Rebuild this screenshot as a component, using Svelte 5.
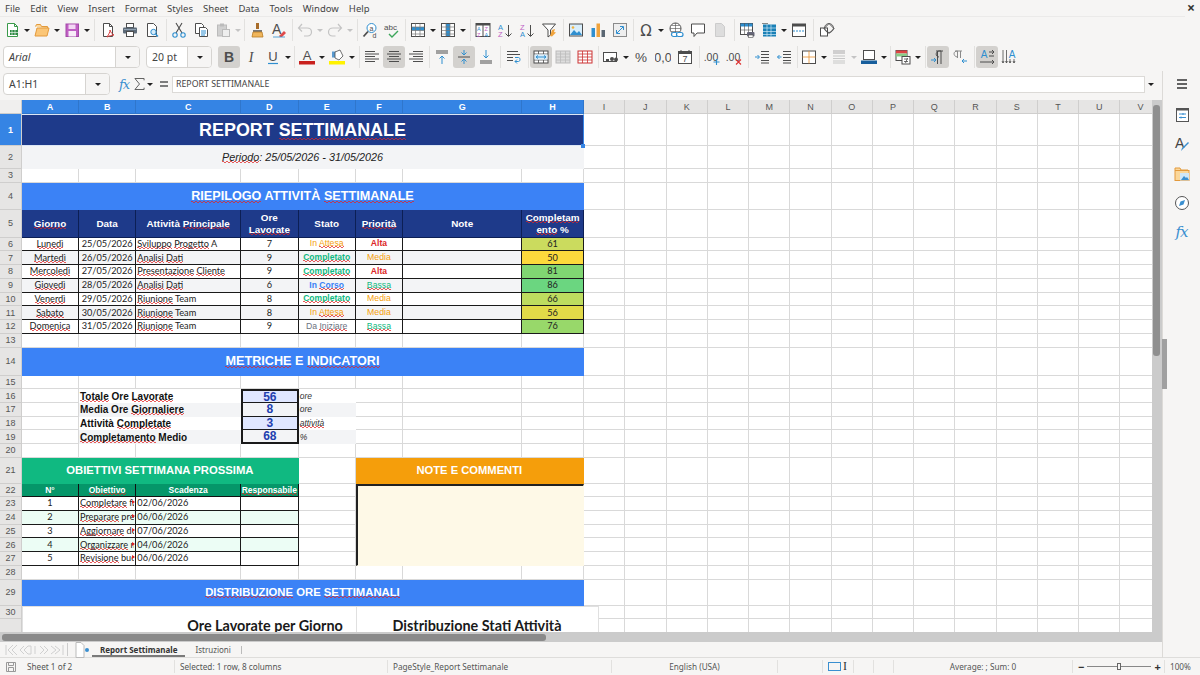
<script>
const S = (c, w = 1) => `fill="none" stroke="${c}" stroke-width="${w}"`;
const G = '#4d4d4d', B = '#2f8fd0', O = '#e8912d', R = '#d33', L = '#8a8a8a';
const icons = {
  new: `<path d="M3.5 1.5h7l3 3v10h-10z" fill="#fff" stroke="#3a9a4a"/><path d="M10.5 1.5v3h3" ${S('#3a9a4a')}/><rect x="6" y="8" width="8" height="5" fill="#2e8b44"/><path d="M8 8v5M11 8v5M6 10.5h8" ${S('#fff',.6)}/>`,
  open: `<path d="M1.5 4.5l1-2h4l1 2h6v2" fill="#fbd79a" stroke="#e39a3c"/><path d="M1 14l2-8h12l-2 8z" fill="#fbc677" stroke="#e39a3c"/>`,
  save: `<rect x="2" y="2" width="12.5" height="12.5" fill="#c05fc4" stroke="#a34aa8"/><rect x="4.5" y="2.5" width="7" height="4.5" fill="#f3d8f4"/><rect x="4.5" y="9" width="7.5" height="5.5" fill="#f8ecf8"/>`,
  pdf: `<path d="M3.5 1.5h6l3 3v10h-9z" fill="#fff" stroke="${G}"/><path d="M9.5 1.5v3h3" ${S(G)}/><path d="M7 15c2-3 3-5 3-7 1 3 2 4 4 5-2 0-5 1-7 2z" ${S('#d94040')}/>`,
  print: `<rect x="4.5" y="1.5" width="7" height="4" fill="#fff" stroke="${G}"/><rect x="1" y="5.5" width="14" height="6" rx="1" fill="#5c6a78"/><rect x="4.5" y="9.5" width="7" height="5" fill="#fff" stroke="${G}"/><path d="M2 7.5h12" stroke="#8fa0b0"/>`,
  preview: `<path d="M3.5 1.5h6l3 3v10h-9z" fill="#fff" stroke="${G}"/><circle cx="9.5" cy="10" r="2.7" fill="#d7ecfa" stroke="${B}"/><path d="M11.5 12l2.5 2.5" stroke="${B}" stroke-width="1.4"/>`,
  cut: `<path d="M5 1l6 10M11 1L5 11" ${S(G,1.1)}/><circle cx="4" cy="13" r="2.2" ${S(B,1.1)}/><circle cx="12" cy="13" r="2.2" ${S(B,1.1)}/>`,
  copy: `<path d="M2.5 1.5h6l2 2v8h-8z" fill="#fff" stroke="${G}"/><path d="M6.5 5.5h6l2 2v7h-8z" fill="#fff" stroke="${G}"/><path d="M8 9h5M8 11h5M8 13h4" stroke="${B}"/>`,
  paste: `<rect x="2.5" y="3" width="9" height="11" fill="#d0d0d0" stroke="#bbb"/><rect x="5" y="1.5" width="4" height="3" fill="#bbb"/><rect x="7.5" y="7.5" width="7" height="7" fill="#eee" stroke="#bbb"/>`,
  clone: `<rect x="7" y="1" width="3" height="6" fill="#a86c2a"/><path d="M4 8h9v2H4z" fill="#777"/><path d="M4 10h9l1 5H3z" fill="#f0b65c" stroke="#b97c24" stroke-width=".8"/>`,
  clear: `<text x="1" y="12" font-size="14" font-family="Liberation Sans" fill="${G}">A</text><path d="M8 14l5-5 2 2-4 4H9z" fill="#e04a4a"/><path d="M2 15h12" stroke="${B}" stroke-width=".8"/>`,
  undo: `<path d="M5 2L1.5 6 5 9.5M2 6h8c3 0 4.500 2 4.500 4s-1.500 4-4 4H7" ${S('#c4c4c4',1.2)}/>`,
  redo: `<path d="M11 2l3.500 4L11 9.500M14 6H6C3 6 1.500 8 1.500 10s1.500 4 4 4h3" ${S('#c4c4c4',1.2)}/>`,
  find: `<circle cx="9.500" cy="6" r="4.500" fill="#fff" stroke="${B}"/><path d="M6 9.500l-4.500 5" stroke="${G}" stroke-width="1.800"/><text x="7.500" y="8.500" font-size="7" font-family="Liberation Sans" fill="${G}">a</text><text x="10.500" y="15.500" font-size="7" font-family="Liberation Sans" fill="${G}">d</text>`,
  spell: `<text x="0" y="8" font-size="8" font-family="Liberation Sans" fill="${G}">abc</text><path d="M5 12l3 3 6-6" ${S('#3ca65a',1.4)}/>`,
  rows: `<rect x="1.500" y="1.500" width="13" height="13" fill="#fff" stroke="${G}"/><rect x="2" y="5" width="12" height="3.500" fill="${B}"/><path d="M1.500 5h13M1.500 8.500h13M1.500 12h13M5.500 1.500v13M10 1.500v13" ${S('#777',.7)}/>`,
  cols: `<rect x="1.500" y="1.500" width="13" height="13" fill="#fff" stroke="${G}"/><rect x="6" y="2" width="4" height="12" fill="${B}"/><path d="M1.500 5h13M1.500 8.500h13M1.500 12h13M6 1.500v13M10 1.500v13" ${S('#777',.7)}/>`,
  sort: `<rect x="1" y="1.500" width="14" height="13" fill="#fff" stroke="${G}"/><path d="M1 1.500h14v2H1z" fill="${G}"/><path d="M8 3v11" stroke="${G}"/><text x="2" y="9" font-size="5.500" font-family="Liberation Sans" fill="${B}">A</text><text x="2" y="14.500" font-size="5.500" font-family="Liberation Sans" fill="#c05fc4">Z</text><text x="9.500" y="9" font-size="5.500" font-family="Liberation Sans" fill="#c05fc4">Z</text><text x="9.500" y="14.500" font-size="5.500" font-family="Liberation Sans" fill="${B}">A</text>`,
  asc: `<text x="1" y="7.500" font-size="7.500" font-family="Liberation Sans" fill="${B}">A</text><text x="1" y="15" font-size="7.500" font-family="Liberation Sans" fill="#c05fc4">Z</text><path d="M11.500 3v11M8.500 11.500l3 3 3-3" ${S(G)}/>`,
  desc: `<text x="1" y="7.500" font-size="7.500" font-family="Liberation Sans" fill="#c05fc4">Z</text><text x="1" y="15" font-size="7.500" font-family="Liberation Sans" fill="${B}">A</text><path d="M11.500 3v11M8.500 11.500l3 3 3-3" ${S(G)}/>`,
  filter: `<path d="M1.500 2h13L9.500 8v5L7 15V8z" fill="#fff" stroke="${G}"/><path d="M9 14l2-6 3-1-1 3 2 .5-4 4z" fill="#f0a33c"/>`,
  image: `<rect x="1.500" y="2" width="13" height="12" fill="#d9eefb" stroke="${G}"/><circle cx="5" cy="5.500" r="1.300" fill="#f2b23e"/><path d="M2 13l4-5 3 3 2-2 3 4z" fill="${B}"/>`,
  chart: `<rect x="1.500" y="6" width="3.500" height="9" fill="${B}"/><rect x="6.500" y="1.500" width="3.500" height="13.500" fill="#f0a33c"/><rect x="11.500" y="8" width="3.500" height="7" fill="#5a6672"/>`,
  pivot: `<rect x="1.500" y="1.500" width="13" height="13" fill="#eee" stroke="${L}"/><path d="M5 11l6-6M8 4.500h3.500V8M8 11.500H4.500V8" ${S(B)}/>`,
  omega: `<text x="8" y="13.500" text-anchor="middle" font-size="15" font-family="DejaVu Sans" fill="${G}">Ω</text>`,
  link: `<circle cx="7.500" cy="6.500" r="5.500" fill="#fff" stroke="${G}"/><path d="M2 6.500h11M7.500 1v11M3.500 3.500h8M3.500 9.500h8" ${S(G,.6)}/><rect x="3.500" y="10.500" width="6" height="4" rx="2" fill="#fff" stroke="${B}" stroke-width="1.200"/><rect x="8.500" y="10.500" width="6.500" height="4" rx="2" fill="#fff" stroke="${B}" stroke-width="1.200"/>`,
  comment: `<path d="M1.500 2h13v9H7l-3 3.500V11H1.500z" fill="#fff" stroke="${G}"/>`,
  hf: `<path d="M3.500 1.500h6l3 3v10h-9z" fill="#ddd" stroke="#ccc"/>`,
  dprint: `<rect x="1.500" y="1.500" width="12" height="11" fill="#fff" stroke="${G}"/><path d="M1.500 1.500h12v3h-12z" fill="${B}"/><path d="M1.500 8h12M5.500 1.500v11M9.500 1.500v11" ${S(G,.6)}/><rect x="8" y="10" width="7.500" height="4.500" rx="1" fill="#667"/><rect x="9.500" y="13" width="4.500" height="2.500" fill="#fff" stroke="${G}" stroke-width=".6"/>`,
  freeze: `<rect x="2" y="2.500" width="13" height="12" fill="#1a80b6"/><path d="M2 6h13M2 9.500h13M2 12.500h13M6 2.500v12M10 2.500v12" ${S('#cfe8f6',.7)}/><path d="M1 1.500h6" stroke="#888"/>`,
  split: `<rect x="1.500" y="2" width="13" height="12.500" fill="#fff" stroke="${G}"/><path d="M1.500 2h13v2.500h-13z" fill="${G}"/><path d="M2 9h12" stroke="${B}" stroke-dasharray="2 1"/>`,
  shapes: `<rect x="1.500" y="6" width="7" height="8" fill="#fff" stroke="${G}"/><path d="M10 1.500l5 5-5 5-5-5z" fill="none" stroke="${G}"/><circle cx="10" cy="6" r="4.500" ${S(G,.8)}/>`,
  i: `<text x="8" y="13" text-anchor="middle" font-size="14" font-style="italic" font-family="Liberation Serif" fill="${G}">I</text>`,
  b: `<text x="8" y="13" text-anchor="middle" font-size="14" font-weight="700" font-family="Liberation Sans" fill="${G}">B</text>`,
  u: `<text x="8" y="12" text-anchor="middle" font-size="13" font-family="Liberation Sans" fill="${G}">U</text><path d="M3 14.500h10" stroke="${B}" stroke-width="1.200"/>`,
  color: `<text x="8" y="11" text-anchor="middle" font-size="13" font-family="Liberation Sans" fill="${G}">A</text><rect x="0" y="12" width="16" height="3.500" fill="#c9211e"/>`,
  hl: `<path d="M3 2.500h4v6H3z" fill="#5a9ad0"/><path d="M6 3l5-2 3 6-4 4-4-2z" fill="#fff" stroke="${G}" stroke-width=".8"/><rect x="0" y="12" width="16" height="3.500" fill="#fff200"/>`,
  al: `<path d="M1 2.500h10M1 5h14M1 7.500h10M1 10h14M1 12.500h10" ${S(G)}/>`,
  ac: `<path d="M3 2.500h10M1 5h14M3 7.500h10M1 10h14M3 12.500h10" ${S(G)}/>`,
  ar: `<path d="M5 2.500h10M1 5h14M5 7.500h10M1 10h14M5 12.500h10" ${S(G)}/>`,
  vt: `<path d="M2 2h12M2 4h12" ${S(G)}/><path d="M8 7v8M5.500 9.500L8 7l2.500 2.500" ${S(B)}/>`,
  vc: `<path d="M2 8h12" ${S(G)}/><path d="M8 1v5M5.500 3.500L8 6l2.500-2.500M8 15v-5M5.500 12.500L8 10l2.500 2.500" ${S(B)}/>`,
  vb: `<path d="M2 12h12M2 14h12" ${S(G)}/><path d="M8 1v8M5.500 6.500L8 9l2.500-2.500" ${S(B)}/>`,
  wrap: `<path d="M1 2.500h11M1 5.500h13M1 8.500h6M1 11.500h6" ${S(G)}/><path d="M9 8.500h3.500c2 0 2 4 0 4H9M11 10.500l-2 2 2 2" ${S(B)}/>`,
  merge: `<rect x="1" y="2" width="14" height="12" fill="#fff" stroke="${G}"/><path d="M1 5h14M1 11h14M5.500 2v3M10.500 2v3M5.500 11v3M10.500 11v3" ${S(G,.8)}/><rect x="1.500" y="5.500" width="13" height="5" fill="#d9eefb"/><path d="M3 8h10M3 8l2-1.500M3 8l2 1.500M13 8l-2-1.500M13 8l-2 1.500" ${S(B)}/>`,
  unmerge: `<rect x="1" y="2" width="14" height="12" fill="#ddd" stroke="#bbb"/><path d="M1 5h14M1 8h14M1 11h14M5.500 2v12M10.500 2v12" ${S('#bbb',.8)}/>`,
  cellcf: `<rect x="1" y="2" width="14" height="12" fill="#fff" stroke="#c33"/><path d="M1 5h14M1 8h14M1 11h14M5.500 2v12M10.500 2v12" ${S('#c33',.8)}/>`,
  cur: `<rect x="0.500" y="3.500" width="13" height="9" fill="#fff" stroke="${G}"/><circle cx="9" cy="10" r="2" fill="${G}"/><circle cx="13" cy="10.500" r="2" fill="${G}"/><rect x="3" y="10" width="3" height="3" fill="${G}"/>`,
  pct: `<text x="8" y="13" text-anchor="middle" font-size="13.500" font-family="Liberation Sans" fill="${G}">%</text>`,
  num: `<text x="8" y="13" text-anchor="middle" font-size="12.500" font-family="Liberation Sans" fill="${G}">0,0</text>`,
  date: `<rect x="1.500" y="2.500" width="13" height="12" fill="#fff" stroke="${G}"/><path d="M1.500 2.500h13v2h-13zM4 1v2M12 1v2" fill="${G}" stroke="${G}"/><text x="8" y="13" text-anchor="middle" font-size="9" font-family="Liberation Sans" fill="${G}">7</text>`,
  dadd: `<text x="7" y="12" text-anchor="middle" font-size="10.500" font-family="Liberation Sans" fill="${G}">.00</text><path d="M12.500 10v6M9.500 13h6" ${S(B,1.100)}/>`,
  ddel: `<text x="7" y="12" text-anchor="middle" font-size="10.500" font-family="Liberation Sans" fill="${G}">.00</text><path d="M10 10.500l5 5M15 10.500l-5 5" ${S(R,1.100)}/>`,
  ind: `<path d="M7 2.500h8M7 5.500h8M7 8.500h8M7 11.500h8M7 14h8" ${S(G)}/><path d="M1 8h4M3.500 6l2 2-2 2" ${S(B)}/>`,
  outd: `<path d="M7 2.500h8M7 5.500h8M7 8.500h8M7 11.500h8M7 14h8" ${S(G)}/><path d="M5.500 8h-4M3.500 6l-2 2 2 2" ${S(B)}/>`,
  bord: `<rect x="1.500" y="2" width="13" height="12.500" fill="#fff" stroke="${G}"/><path d="M8 2v12.500M1.500 8h13" ${S(O,.8)}/>`,
  bstyle: `<path d="M2 2h12M2 4h12" ${S('#aaa',1.200)}/><path d="M2 7h12M2 9.500h12M2 12h12M2 14h12" ${S('#bbb',.8)}/>`,
  bcol: `<rect x="2.500" y="1.500" width="11" height="9" fill="#fff" stroke="${G}"/><path d="M0 15h16v-3.500H0z" fill="#175e9c"/>`,
  cond: `<rect x="1" y="1.500" width="11" height="10" fill="#fff" stroke="${G}"/><path d="M1 1.500h11v3H1z" fill="#d44"/><path d="M1 4.500h11v3H1z" fill="#8c8"/><rect x="7" y="7.500" width="8" height="7.500" fill="#fff" stroke="${G}"/><path d="M9 10h4M9 12.500h4M12.500 9l-2 5" ${S(G,.8)}/>`,
  ltr: `<path d="M7.500 15V2M11 15V2M6 2h7M11 2C5 1 5 8 9 8" ${S(G)}/><path d="M1 11h5M4 9l2 2-2 2" ${S(B)}/>`,
  rtl: `<path d="M5.500 9V2M8.500 9V2M3 2h7M5.500 2C1 2 1 7 5 8" ${S(L)}/><path d="M15 12h-5M12 10l-2 2 2 2" ${S(B)}/>`,
  tltr: `<text x="5" y="8.500" text-anchor="middle" font-size="10" font-family="Liberation Sans" fill="${B}">A</text><path d="M10 3h5M10 7h5M1 13h14M13 1l2 2-2 2M13 11l2 2-2 2" ${S(G)}/>`,
  tvert: `<text x="11" y="9" text-anchor="middle" font-size="10" font-family="Liberation Sans" fill="${B}">A</text><path d="M2 1v13M5.500 1v13M1 12l1 2 1-2M4.500 12l1 2 1-2M9 10v4M8 12l1 2 1-2M13 10v4M12 12l1 2 1-2" ${S(G,.8)}/>`,
};
const t1 = ['new','a','open','a','save','a','s6','pdf','print','preview','s5','cut','copy','paste','ag','s4','clone','clear','s4','undo','ag','redo','ag','s5','find','spell','s4','rows','a','cols','a','s5','sort','asc','desc','filter','s5','image','chart','pivot','s4','omega','a','link','comment','hf','s5','dprint','freeze','a','split','s6','shapes'];
const t2 = ['*b','i','u','a','s4','color','a','hl','a','s5','al','*ac','ar','s4','vt','*vc','vb','s6','wrap','s5','*merge','unmerge','cellcf','s4','cur','a','pct','num','date','s5','dadd','ddel','s6','ind','outd','s3','bord','a','bstyle','ag','bcol','a','s4','cond','a','s5','*ltr','rtl','s5','*tltr','tvert'];
const isSep = (t) => /^s\d$/.test(t);
const menus = ['File','Edit','View','Insert','Format','Styles','Sheet','Data','Tools','Window','Help'];

const colW = [57,57.3,104.7,57.7,57,47.5,119,61.800,...Array(14).fill(41.280)];
const rowH = [32,23,13.500,27,28,13.800,13.800,13.700,13.800,13.800,13.700,13.800,13.800,28,13.500,13.700,13.700,13.700,13.800,13.500,26,13.500,13.800,13.800,13.800,13.700,13.800,13.700,26,13.800,40];
const letters = 'ABCDEFGHIJKLMNOPQRSTUV'.split('');
const cellsSpec = [];
const add = (c, r, text, cls = '', cs = 1, rs = 1) => cellsSpec.push({ c, r, text, cls, cs, rs });
add(1,1,'REPORT ~SETTIMANALE~','title',8);
add(1,2,'~Periodo~: 25/05/2026 - 31/05/2026','period',8);
add(1,4,'~RIEPILOGO~ ATTIVITÀ ~SETTIMANALE~','band big',8);
['~Giorno~','Data','Attività ~Principale~','Ore ~Lavorate~','Stato','~Priorità~','Note','~Completam ento~ %'].forEach((t,i)=>add(i+1,5,t,'thead'));
const data = [
  ['~Lunedì~','25/05/2026','~Sviluppo~ ~Progetto~ A',7,'In ~Attesa~','wait','Alta','high',61,'#cbdb5e'],
  ['~Martedì~','26/05/2026','~Analisi~ ~Dati~',9,'~Completato~','done','Media','mid',50,'#fcd93c'],
  ['~Mercoledì~','27/05/2026','~Presentazione~ ~Cliente~',9,'~Completato~','done','Alta','high',81,'#80d672'],
  ['~Giovedì~','28/05/2026','~Analisi~ ~Dati~',6,'In ~Corso~','prog','~Bassa~','low',86,'#6bd680'],
  ['~Venerdì~','29/05/2026','~Riunione~ Team',8,'~Completato~','done','Media','mid',66,'#bddc5f'],
  ['~Sabato~','30/05/2026','~Riunione~ Team',8,'In ~Attesa~','wait','Media','mid',56,'#e2da48'],
  ['~Domenica~','31/05/2026','~Riunione~ Team',9,'Da ~Iniziare~','todo','~Bassa~','low',76,'#98d86a'],
];
data.forEach((d,i)=>{
  const r = 6+i, alt = i%2 ? ' alt' : '';
  add(1,r,d[0],'td ctr'+alt); add(2,r,d[1],'td ctr'+alt); add(3,r,d[2],'td'+alt);
  add(4,r,String(d[3]),'td ctr'+alt); add(5,r,d[4],'td ctr st '+d[5]+alt); add(6,r,d[6],'td ctr st '+d[7]+alt);
  add(7,r,'','td'+alt); add(8,r,String(d[8]),'td ctr pct',1,1);
  cellsSpec[cellsSpec.length-1].bg = d[9];
});
add(1,14,'~METRICHE~ E ~INDICATORI~','band big',8);
[['~Totale~ Ore ~Lavorate~','56','ore'],['Media Ore ~Giornaliere~','8','ore'],['Attività ~Completate~','3','~attività~'],['~Completamento~ Medio','68','%']].forEach((m,i)=>{
  const r=16+i, alt=i%2?' malt':'';
  add(2,r,m[0],'mlabel'+alt,2); add(4,r,m[1],'mval'+(i%2?' mv2':'')+(i===3?' mlast':'')+(i===0?' mfirst':'')); add(5,r,m[2],'munit'+alt);
});
add(1,21,'OBIETTIVI SETTIMANA PROSSIMA','green',4);
add(6,21,'NOTE E COMMENTI','orange',3);
['N°','~Obiettivo~','Scadenza','~Responsabile~'].forEach((t,i)=>add(i+1,22,t,'ghead'));
[['~Completare~ fase finale','02/06/2026'],['~Preparare~ presentazione','06/06/2026'],['~Aggiornare~ documenti','07/06/2026'],['~Organizzare~ meeting','04/06/2026'],['~Revisione~ budget','06/06/2026']].forEach((g,i)=>{
  const r=23+i, alt=i%2?' galt':'';
  add(1,r,String(i+1),'td ctr'+alt); add(2,r,g[0],'td clip'+alt); add(3,r,g[1],'td'+alt); add(4,r,'','td'+alt);
});
add(6,22,'','notes',3,6);
add(1,29,'~DISTRIBUZIONE~ ORE ~SETTIMANALI~','band',8);

const occ = new Set();
cellsSpec.forEach(s=>{ for(let x=s.c;x<s.c+s.cs;x++) for(let y=s.r;y<s.r+s.rs;y++) occ.add(x+':'+y); });
const blanks = [];
for (let y=1;y<=rowH.length;y++) for (let x=1;x<=colW.length;x++) if(!occ.has(x+':'+y)) blanks.push({c:x,r:y});
const parts = (t) => t.split('~').map((s,i)=>({s, w:i%2===1}));
const gridCols = `22px ${colW.map(w=>w+'px').join(' ')}`;
const gridRows = `14px ${rowH.map(h=>h+'px').join(' ')}`;
</script>

<div class="app">
  <div class="menu">
    <div class="menu-items">{#each menus as m}<span>{m}</span>{/each}</div>
    <span class="close">×</span>
  </div>
  <div class="tb tb1">
    {#each t1 as t}
      {#if t==='a'}<span class="arrow"></span>
      {:else if t==='ag'}<span class="arrow off"></span>
      {:else if isSep(t)}<span class="sep {t}"></span>
      {:else}<span class="btn"><svg viewBox="0 0 16 16" width="16" height="16">{@html icons[t]}</svg></span>{/if}
    {/each}
  </div>
  <div class="tb tb2">
    <div class="combo font"><span class="ctext"><i>Arial</i></span><span class="cdrop"><span class="arrow"></span></span></div>
    <div class="combo size"><span class="ctext">20 pt</span><span class="cdrop"><span class="arrow"></span></span></div>
    {#each t2 as t}
      {#if t==='a'}<span class="arrow"></span>
      {:else if t==='ag'}<span class="arrow off"></span>
      {:else if isSep(t)}<span class="sep {t}"></span>
      {:else}<span class="btn" class:on={t[0]==='*'}><svg viewBox="0 0 16 16" width="16" height="16">{@html icons[t.replace('*','')]}</svg></span>{/if}
    {/each}
  </div>
  <div class="main">
    <div class="work">
      <div class="fbar">
        <div class="combo name"><span class="ctext">A1:H1</span><span class="cdrop"><span class="arrow"></span></span></div>
        <span class="fx">𝑓𝑥</span>
        <svg class="sigma" viewBox="0 0 12 14" width="11" height="14"><path d="M11 3V1H1l5 6-5 6h10v-2" fill="none" stroke="#555"/></svg>
        <span class="arrow fa"></span>
        <svg class="eq" viewBox="0 0 10 10" width="10" height="10"><path d="M1 3h8M1 7h8" stroke="#555" stroke-width="1.300"/></svg>
        <div class="finput">REPORT SETTIMANALE</div>
        <span class="arrow fe"></span>
      </div>
      <div class="sheetrow">
        <div class="sheet">
          <div class="grid" style:grid-template-columns={gridCols} style:grid-template-rows={gridRows}>
            <div class="corner"></div>
            {#each letters as l,i}<div class="ch" class:sel={i<8}>{l}</div>{/each}
            {#each rowH as _,i}<div class="rh" class:sel={i===0} style:grid-row={i+2} style:grid-column={1}>{i+1}</div>{/each}
            {#each blanks as b}<div class="blank" style:grid-row={b.r+1} style:grid-column={b.c+1}></div>{/each}
            {#each cellsSpec as s}
              <div class="cell {s.cls}" style:grid-row="{s.r+1} / span {s.rs}" style:grid-column="{s.c+1} / span {s.cs}" style:background={s.bg}>
                <span class="tx">{#each parts(s.text) as p}{#if p.w}<span class="sp">{p.s}</span>{:else}{p.s}{/if}{/each}</span>
              </div>
            {/each}
          </div>
          <div class="handle"></div>
          <div class="chart c1"></div>
          <div class="chart c2"></div>
          <div class="ctitle t1">Ore Lavorate per Giorno</div>
          <div class="ctitle t2">Distribuzione Stati Attività</div>
        </div>
        <div class="vscroll"><div class="vthumb"></div></div>
      </div>
      <div class="hscroll"><div class="hthumb"></div></div>
      <div class="tabs">
        <svg class="nav" viewBox="0 0 62 14" width="62" height="14"><path d="M1 2v10M8 2L3 7l5 5M12 2L7 7l5 5M19 3l-4 4 4 4M23 3l-4 4 4 4h3V3zM30 3v8M35 3l4 4-4 4M39 3l4 4-4 4M46 3l5 4-5 4M50 3l5 4-5 4M58 2v10" fill="none" stroke="#d0d0d0"/></svg>
        <span class="tsep"></span>
        <svg class="addsheet" viewBox="0 0 10 16" width="10" height="16"><path d="M1 .5h5l3 3v12H1z" fill="#fff" stroke="#bbb"/></svg>
        <span class="dot"></span>
        <span class="tab active">Report Settimanale</span>
        <span class="tab">Istruzioni</span>
        <span class="tsep2"></span>
      </div>
    </div>
    <div class="side">
      <svg class="first" viewBox="0 0 16 16" width="16" height="16"><path d="M3 4h10M3 8h10M3 12h10" stroke="#333" stroke-width="1.300"/></svg>
      <svg viewBox="0 0 16 16" width="16" height="16"><rect x="2.500" y="1.500" width="12" height="13" fill="#fff" stroke="#555"/><path d="M2.500 1.500h12v2h-12z" fill="#555"/><path d="M5 7h7M5 10.500h7" stroke="#3a8fd0"/><path d="M9 6v2M7 9.500v2" stroke="#3a8fd0"/></svg>
      <svg viewBox="0 0 16 16" width="16" height="16"><text x="1" y="12" font-size="14" font-family="Liberation Sans" fill="#444">A</text><path d="M7 15l1-3 6-6 1 1-6 6z" fill="#3a8fd0"/></svg>
      <svg viewBox="0 0 16 16" width="16" height="16"><path d="M1 4V2h5l1 2h7v3" fill="#fbd79a" stroke="#e39a3c"/><rect x="1" y="4.500" width="14" height="10" fill="#fbd79a" stroke="#e39a3c"/><rect x="6" y="7" width="9" height="7.500" fill="#cfe6f7"/><path d="M7 14l3-4 2 2 1-1 2 3z" fill="#3a8fd0"/></svg>
      <svg viewBox="0 0 16 16" width="16" height="16"><circle cx="8" cy="8" r="6.500" fill="#fff" stroke="#555"/><path d="M11 5L9.500 9.500 5 11l1.500-4.500z" fill="#3a8fd0"/></svg>
      <span class="sfx">𝑓𝑥</span>
      <span class="grip"></span>
    </div>
  </div>
  <div class="status">
    <div class="sc sc1">
      <svg viewBox="0 0 12 12" width="12" height="12"><path d="M1.500 1.500h9v9h-9z" fill="none" stroke="#999"/><path d="M3.500 1.500v3h5v-3M3.500 10.500v-4h5v4" fill="none" stroke="#999"/></svg>
      <span>Sheet 1 of 2</span>
    </div>
    <div class="sc w213">Selected: 1 row, 8 columns</div>
    <div class="sc w224">PageStyle_Report Settimanale</div>
    <div class="sc w166 mid-t">English (USA)</div>
    <div class="sc w45"></div>
    <div class="sc w31"><span class="rect"></span><span class="beam">I</span></div>
    <div class="sc w20"></div>
    <div class="sc w20"></div>
    <div class="sc w179 mid-t">Average: ; Sum: 0</div>
    <div class="sc w92 zoomc"><b>−</b><span class="slider"><span class="knob"></span></span><b>+</b></div>
    <div class="sc w36">100%</div>
  </div>
</div>

<style>
:global(body){margin:0;overflow:hidden}
.app{width:1200px;height:675px;display:flex;flex-direction:column;background:#f6f5f4;font-family:"Noto Sans",sans-serif;color:#3b3b3b;overflow:hidden}
.menu{height:17px;display:flex;align-items:center;justify-content:space-between;padding:0 7px 1px 5px;box-sizing:border-box;position:relative;font-size:9.500px;flex:none}
.menu::after{content:"";position:absolute;left:0;right:15px;bottom:0;height:1px;background:#ebeae9}
.menu-items{display:flex;gap:10.100px;color:#444}
.close{font-size:14px;font-weight:700;line-height:12px;color:#333;margin-right:-2px}
.tb{display:flex;align-items:center;flex:none}
.tb1{padding-left:1px;height:26px}
.tb2{padding-left:3px;height:28px}
.btn{width:22px;height:22px;display:flex;align-items:center;justify-content:center;flex:none;border-radius:3px}
.btn.on{background:#d3d1ce}
.arrow{width:8px;height:22px;display:inline-flex;align-items:center;justify-content:center;flex:none}
.arrow::before{content:"";border-left:3px solid transparent;border-right:3px solid transparent;border-top:3px solid #222}
.arrow.off::before{border-top-color:#c4c4c4}
.sep{height:22px;flex:none;position:relative}
.sep::before{content:"";position:absolute;left:50%;top:0;bottom:0;width:1px;background:#e2e1df}
.s3{width:3px}.s4{width:4px}.s5{width:5px}.s6{width:6px}
.combo{display:flex;height:22px;background:#fff;border:1px solid #d6d4d1;border-radius:4px;box-sizing:border-box;flex:none;font-size:10.500px;overflow:hidden}
.ctext{flex:1;display:flex;align-items:center;padding-left:5px;color:#444}
.cdrop{width:23px;display:flex;align-items:center;justify-content:center;background:#f6f5f4;border-left:1px solid #d6d4d1}
.font{width:137px;margin-right:6px}
.size{width:66px;margin-right:6px}
.main{flex:1;display:flex;min-height:0}
.work{width:1162px;display:flex;flex-direction:column;flex:none}
.fbar{height:29px;display:flex;align-items:center;flex:none;padding-left:3px;box-sizing:border-box;padding-bottom:3px}
.name{width:107px}
.fx{margin-left:9px;width:15px;font-size:13px;color:#3a8fd0;font-family:"DejaVu Serif",serif;font-style:italic;white-space:nowrap;letter-spacing:-1px}
.fa{margin-left:1px}
.eq{margin-left:5px}
.finput{margin-left:3px;width:973px;height:17px;background:#fff;border:1px solid #dcdad7;box-sizing:border-box;font-size:8.800px;line-height:15px;padding-left:3px;color:#444}
.fe{margin-left:2px}
.sheetrow{height:532px;display:flex;flex:none}
.sheet{width:1152px;height:532px;position:relative;overflow:hidden;background:#fff;flex:none}
.grid{display:grid;width:max-content;font-family:"Lato",sans-serif;font-size:9.200px;color:#222}
.corner{background:#f0efee;border-right:1px solid #ccc;border-bottom:1px solid #ccc;box-sizing:border-box}
.ch{background:#e6e5e4;color:#555;font:400 9px/14px "Liberation Sans",sans-serif;text-align:center;box-sizing:border-box;border-right:1px solid #cfcecd;border-bottom:1px solid #cfcecd;overflow:hidden}
.ch.sel{background:#3584e4;color:#fff;font-weight:700;border-color:#2f76cc}
.rh{background:#e6e5e4;color:#555;font:400 9px "Liberation Sans",sans-serif;display:flex;align-items:center;justify-content:center;border-bottom:1px solid #cfcecd;border-right:1px solid #cfcecd;box-sizing:border-box}
.rh.sel{background:#3584e4;color:#fff;font-weight:700}
.blank{border-right:1px solid #d9d9d9;border-bottom:1px solid #d9d9d9;box-sizing:border-box;background:#fff}
.cell{box-sizing:border-box;display:flex;align-items:center;min-width:0;overflow:hidden;position:relative;border-right:1px solid transparent;border-bottom:1px solid transparent;white-space:nowrap}
.tx{display:block;min-width:0}
.sp{background-image:linear-gradient(45deg,transparent 35%,#e0262680 35%,#e02626 65%,transparent 65%),linear-gradient(-45deg,transparent 35%,#e02626 35%,#e0262680 65%,transparent 65%);background-size:4px 2px,4px 2px;background-position:0 100%,2px 100%;background-repeat:repeat-x}
.title,.period,.band,.thead,.green,.orange,.ghead,.ctr,.mval{justify-content:center;text-align:center}
.title{background:#1e3a8a;color:#fff;font:700 17.900px "Liberation Sans",sans-serif;border:1px solid #dce6f5;border-left:0;border-right:1px solid #3584e4}
.period{background:#f3f4f6;color:#222;font:italic 10.800px "Liberation Sans",sans-serif}
.band{background:#3b82f6;color:#fff;font:700 11.300px "Liberation Sans",sans-serif}
.band.big{font-size:12.650px}
.thead{background:#1e3a8a;color:#fff;font:700 9.900px/12px "Liberation Sans",sans-serif;border-color:#0c1f55;white-space:normal;padding:2px 1px 0}
.td{border-color:#1a1a1a;background:#fff;font-size:9.200px;padding:0 1px 1px}
.alt{background:#f3f4f6}
.galt{background:#ecfdf5}
.st{font:700 8.550px "Liberation Sans",sans-serif}
.wait,.mid,.low,.todo{font-weight:400;font-size:8.700px}
.wait{color:#f59e0b}
.done{color:#10b981}
.prog{color:#3b82f6}
.todo{color:#6b7280}
.high{color:#dc2626}
.mid{color:#f59e0b}
.low{color:#10b981}
.pct{color:#222}
.mlabel{font:700 10px "Liberation Sans",sans-serif;color:#111;background:#fff;padding:1px 0 0 1px}
.mlabel.malt{background:#f3f4f6}
.mval{background:#e0e7ff;color:#1e40af;font:700 12px "Liberation Sans",sans-serif;border:2px solid #1a1a1a;border-top:0;border-bottom-width:1px}
.mv2{background:#f3f4f6}
.mfirst{border-top:2px solid #1a1a1a}
.mlast{border-bottom-width:2px}
.munit{font:italic 8.500px "Liberation Sans",sans-serif;color:#333;background:#fff;padding-left:1px;overflow:visible}
.munit.malt{background:#f3f4f6}
.green{background:#10b981;color:#fff;font:700 11.300px "Liberation Sans",sans-serif}
.orange{background:#f59e0b;color:#fff;font:700 11.200px "Liberation Sans",sans-serif}
.ghead{background:#059669;color:#fff;font:700 8.500px "Liberation Sans",sans-serif;border-color:#111}
.clip .tx{overflow:hidden;width:100%}
.clip::after{content:"";position:absolute;right:0;top:50%;margin-top:-3px;border-left:3px solid #d22;border-top:2.500px solid transparent;border-bottom:2.500px solid transparent}
.notes{background:#fef9e7;border-top:2px solid #222;border-left:2px solid #222}
.handle{position:absolute;left:581px;top:44px;width:4px;height:4px;background:#3584e4;border:0}
.chart{position:absolute;top:506px;height:40px;background:#fff;border:1px solid #e0e0e0;box-sizing:border-box}
.c1{left:22px;width:335px}
.c2{left:356px;width:243px}
.ctitle{position:absolute;top:517px;font:700 14.400px "Lato",sans-serif;color:#1a1a1a;white-space:nowrap;transform:translateX(-50%)}
.t1{left:265px}
.t2{left:477px}
.vscroll{width:10px;height:542px;background:#cbcbcb;position:relative;flex:none}
.vthumb{position:absolute;left:1px;right:2px;top:5px;height:251px;background:#8f8f8f;border-radius:3px}
.hscroll{height:10px;width:1152px;background:#cbcbcb;flex:none;display:flex;align-items:center;padding:0 2px;box-sizing:border-box}
.hthumb{width:544px;height:7px;background:#8a8a8a;border-radius:3px}
.tabs{height:16px;display:flex;align-items:center;font-size:8px;border-bottom:1px solid #dedddb;padding-left:5px;box-sizing:border-box;width:1200px;flex:none;color:#555}
.nav{flex:none}
.tsep{width:1px;height:13px;background:#ccc}
.addsheet{margin-left:7px;flex:none}
.dot{width:4px;height:4px;border-radius:50%;background:#3a8fd0;margin:0 3px 0 0;flex:none}
.tab{padding:0 9px 0 8px;height:15px;line-height:15px;box-sizing:border-box}
.tab.active{font-weight:700;color:#333;border-bottom:2px solid #7a7a7a;padding:0 8px;margin-right:2px}
.tsep2{width:1px;height:8px;background:#bbb;margin-left:1px}
.side{width:38px;border-left:1px solid #dcdad7;box-sizing:border-box;display:flex;flex-direction:column;align-items:center;padding-top:5px;gap:13.400px;position:relative}
.first{margin-bottom:1.500px}
.sfx{font-family:"DejaVu Serif",serif;font-style:italic;font-size:15px;line-height:16px;color:#3a8fd0;letter-spacing:-1px;white-space:nowrap}
.grip{position:absolute;left:-1px;top:268px;width:5px;height:50px;background:#a0a0a0}
.status{height:17px;flex:none;font-size:8.200px;color:#555;display:flex;align-items:stretch}
.sc{box-sizing:border-box;display:flex;align-items:center;border-left:1px solid #e2e1df;padding-left:5px;white-space:nowrap;flex:none;margin:2px 0}
.sc1{width:174px;border-left:0;padding-left:5px;gap:10px}
.w213{width:213px}.w224{width:224px}.w166{width:166px}.w45{width:45px}.w31{width:31px}.w20{width:20px}.w179{width:179px}.w92{width:92px}.w36{width:36px}
.mid-t{justify-content:center;padding-left:0}
.rect{width:11px;height:7px;border:1px solid #3a8fd0;display:inline-block;flex:none}
.beam{margin-left:2px;font:12px "Liberation Serif",serif;color:#333}
.zoomc{gap:3px}
.zoomc b{font-size:11px;font-weight:700;color:#333;line-height:10px}
.slider{width:64px;height:1px;background:#888;position:relative;display:block;flex:none}
.knob{position:absolute;left:30px;top:-3px;width:2px;height:5px;border:1px solid #666;background:#f6f5f4}
</style>
